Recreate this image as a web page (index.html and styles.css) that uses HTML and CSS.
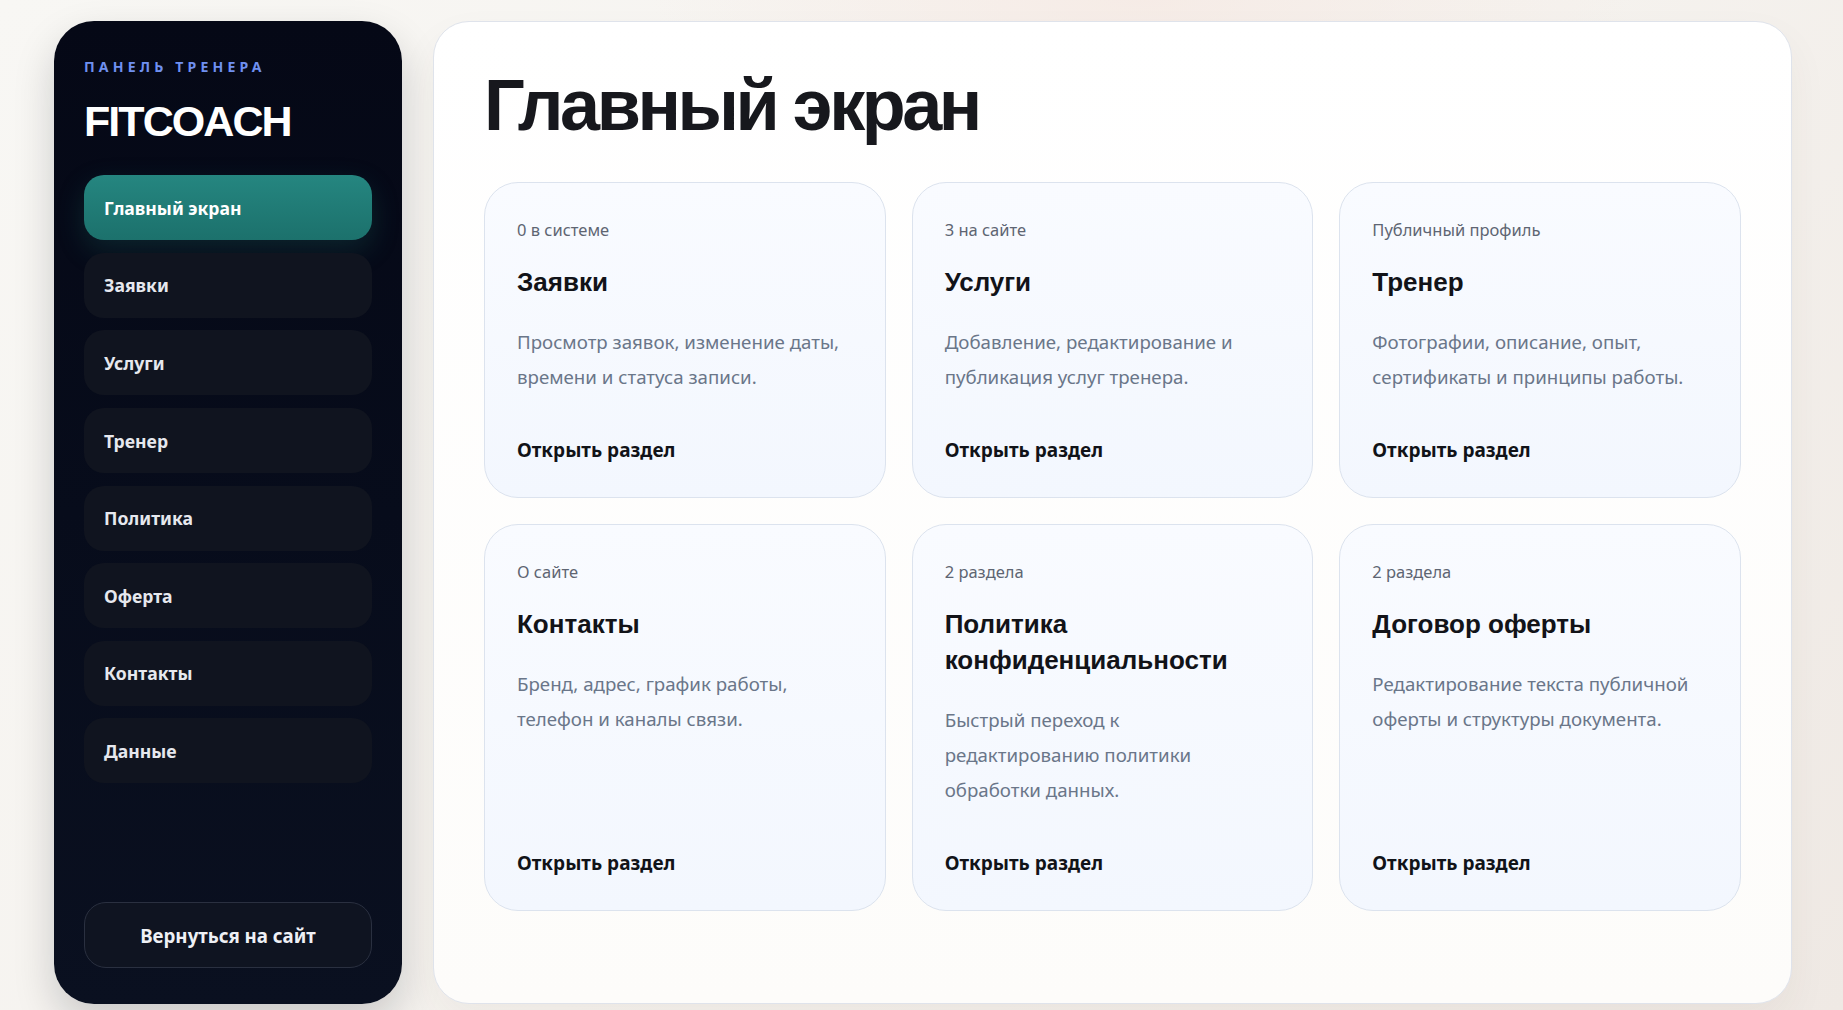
FILE: index.html
```html
<!DOCTYPE html>
<html lang="ru">
<head>
<meta charset="utf-8">
<title>FITCOACH — Панель тренера</title>
<link rel="stylesheet" href="styles.css">
</head>
<body>
<aside class="sidebar">
  <div class="brand-kicker">Панель тренера</div>
  <div class="brand">FITCOACH</div>
  <nav class="nav">
    <a class="nav-item active">Главный экран</a>
    <a class="nav-item">Заявки</a>
    <a class="nav-item">Услуги</a>
    <a class="nav-item">Тренер</a>
    <a class="nav-item">Политика</a>
    <a class="nav-item">Оферта</a>
    <a class="nav-item">Контакты</a>
    <a class="nav-item">Данные</a>
  </nav>
  <a class="back-btn">Вернуться на сайт</a>
</aside>
<main class="main">
  <h1 class="page-title">Главный экран</h1>
  <section class="cards">
    <article class="card">
      <div class="card-meta">0 в системе</div>
      <h2 class="card-title">Заявки</h2>
      <p class="card-desc">Просмотр заявок, изменение даты, времени и статуса записи.</p>
      <a class="card-link">Открыть раздел</a>
    </article>
    <article class="card">
      <div class="card-meta">3 на сайте</div>
      <h2 class="card-title">Услуги</h2>
      <p class="card-desc">Добавление, редактирование и публикация услуг тренера.</p>
      <a class="card-link">Открыть раздел</a>
    </article>
    <article class="card">
      <div class="card-meta">Публичный профиль</div>
      <h2 class="card-title">Тренер</h2>
      <p class="card-desc">Фотографии, описание, опыт, сертификаты и принципы работы.</p>
      <a class="card-link">Открыть раздел</a>
    </article>
    <article class="card">
      <div class="card-meta">О сайте</div>
      <h2 class="card-title">Контакты</h2>
      <p class="card-desc">Бренд, адрес, график работы, телефон и каналы связи.</p>
      <a class="card-link">Открыть раздел</a>
    </article>
    <article class="card">
      <div class="card-meta">2 раздела</div>
      <h2 class="card-title">Политика конфиденциальности</h2>
      <p class="card-desc">Быстрый переход к редактированию политики обработки данных.</p>
      <a class="card-link">Открыть раздел</a>
    </article>
    <article class="card">
      <div class="card-meta">2 раздела</div>
      <h2 class="card-title">Договор оферты</h2>
      <p class="card-desc">Редактирование текста публичной оферты и структуры документа.</p>
      <a class="card-link">Открыть раздел</a>
    </article>
  </section>
</main>
</body>
</html>
```

FILE: styles.css
```css
* { box-sizing: border-box; }

html, body { height: 100%; }

body {
  margin: 0;
  height: 100vh;
  padding: 21px 51px 6px 54px;
  display: flex;
  gap: 31px;
  font-family: "Noto Sans", "Open Sans", sans-serif;
  background:
    radial-gradient(ellipse 700px 220px at 62% 0%, rgba(246, 232, 226, 0.7), rgba(246, 232, 226, 0) 70%),
    linear-gradient(135deg, #f8f7f4 0%, #f5f2ee 55%, #efe9e4 100%);
  color: #111318;
  overflow: hidden;
}

/* Sidebar */
.sidebar {
  width: 348px;
  flex: none;
  display: flex;
  flex-direction: column;
  padding: 37px 30px 36px;
  border-radius: 40px;
  background: linear-gradient(180deg, #050816 0%, #070c1b 50%, #0a1020 100%);
  box-shadow: 0 18px 40px rgba(10, 14, 30, 0.18);
}

.brand-kicker {
  font-size: 14px;
  line-height: 18px;
  font-weight: 700;
  letter-spacing: 0.3em;
  text-transform: uppercase;
  color: #6f90f0;
}

.brand {
  margin-top: 22px;
  font-family: "Liberation Sans", Arial, sans-serif;
  font-weight: 700;
  font-size: 43px;
  line-height: 1.1;
  letter-spacing: -0.045em;
  color: #ffffff;
}

.nav {
  margin-top: 30px;
  display: flex;
  flex-direction: column;
  gap: 12.6px;
}

.nav-item {
  height: 65px;
  display: flex;
  align-items: center;
  padding: 0 20px;
  border-radius: 20px;
  background: #10141f;
  color: #e6e8ee;
  font-size: 17.6px;
  font-weight: 700;
  text-decoration: none;
}

.nav-item.active {
  background: linear-gradient(180deg, #258680 0%, #1c716c 100%);
  color: #ffffff;
  box-shadow: 0 10px 28px rgba(30, 130, 120, 0.22);
}

.back-btn {
  margin-top: auto;
  height: 66px;
  display: flex;
  align-items: center;
  justify-content: center;
  border: 1px solid #2a3040;
  border-radius: 22px;
  background: #0f1421;
  color: #eef0f5;
  font-size: 18.7px;
  font-weight: 700;
  text-decoration: none;
}

/* Main */
.main {
  flex: 1;
  min-width: 0;
  padding: 47px 50px;
  border: 1px solid #dfe3eb;
  border-radius: 36px;
  background: linear-gradient(180deg, #ffffff 0%, #fdfcfa 100%);
  box-shadow: 0 18px 40px rgba(80, 60, 40, 0.05);
}

.page-title {
  margin: 0 0 41px;
  font-family: "Liberation Sans", Arial, sans-serif;
  font-weight: 700;
  font-size: 72px;
  line-height: 1;
  letter-spacing: -0.048em;
  color: #17181d;
}

.cards {
  display: grid;
  grid-template-columns: repeat(3, 1fr);
  column-gap: 26px;
  row-gap: 26px;
}

.card {
  display: flex;
  flex-direction: column;
  padding: 36px 38px 35px 32px;
  border: 1px solid #dce3ee;
  border-radius: 34px;
  background: linear-gradient(180deg, #f9fbff 0%, #f3f7fe 100%);
}

.card-meta {
  font-size: 16.5px;
  line-height: 22px;
  color: #5e6572;
}

.card-title {
  margin: 23px 0 0;
  font-family: "Liberation Sans", Arial, sans-serif;
  font-weight: 700;
  font-size: 26px;
  line-height: 36px;
  letter-spacing: 0;
  color: #121318;
}

.card-desc {
  margin: 24px 0 0;
  font-size: 18.7px;
  line-height: 35px;
  color: #6a7689;
}

.card-link {
  margin-top: auto;
  padding-top: 44px;
  font-size: 19px;
  line-height: 24px;
  font-weight: 700;
  color: #111318;
  text-decoration: none;
}
```
